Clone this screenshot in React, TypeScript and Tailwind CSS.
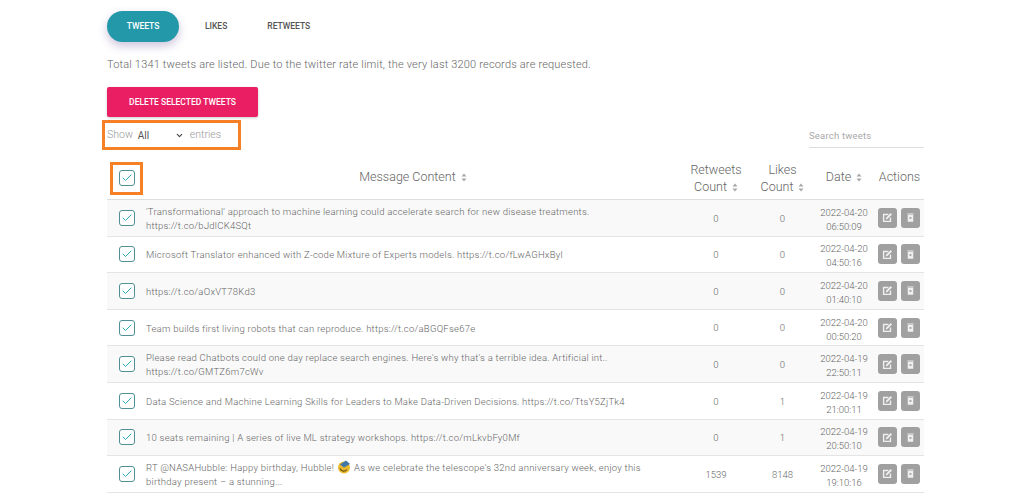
import { Check, ChevronDown } from "lucide-react";

type Row = {
  text: string[];
  retweets: number;
  likes: number;
  date: string;
  time: string;
  emoji?: boolean;
};

const rows: Row[] = [
  {
    text: ["'Transformational' approach to machine learning could accelerate search for new disease treatments.", "https://t.co/bJdlCK4SQt"],
    retweets: 0,
    likes: 0,
    date: "2022-04-20",
    time: "06:50:09",
  },
  {
    text: ["Microsoft Translator enhanced with Z-code Mixture of Experts models. https://t.co/fLwAGHxByl"],
    retweets: 0,
    likes: 0,
    date: "2022-04-20",
    time: "04:50:16",
  },
  { text: ["https://t.co/aOxVT78Kd3"], retweets: 0, likes: 0, date: "2022-04-20", time: "01:40:10" },
  {
    text: ["Team builds first living robots that can reproduce. https://t.co/aBGQFse67e"],
    retweets: 0,
    likes: 0,
    date: "2022-04-20",
    time: "00:50:20",
  },
  {
    text: ["Please read Chatbots could one day replace search engines. Here's why that's a terrible idea. Artificial int..", "https://t.co/GMTZ6m7cWv"],
    retweets: 0,
    likes: 0,
    date: "2022-04-19",
    time: "22:50:11",
  },
  {
    text: ["Data Science and Machine Learning Skills for Leaders to Make Data-Driven Decisions. https://t.co/TtsY5ZjTk4"],
    retweets: 0,
    likes: 1,
    date: "2022-04-19",
    time: "21:00:11",
  },
  {
    text: ["10 seats remaining | A series of live ML strategy workshops. https://t.co/mLkvbFy0Mf"],
    retweets: 0,
    likes: 1,
    date: "2022-04-19",
    time: "20:50:10",
  },
  {
    text: ["As we celebrate the telescope's 32nd anniversary week, enjoy this", "birthday present – a stunning..."],
    retweets: 1539,
    likes: 8148,
    date: "2022-04-19",
    time: "19:10:16",
    emoji: true,
  },
];

const Box = () => (
  <span className="flex h-[16px] w-[16px] items-center justify-center rounded-[3px] border-[1.5px] border-[#4f8f95] bg-white">
    <Check size={12} strokeWidth={2} className="text-[#2aa9b8]" />
  </span>
);

const Sort = () => (
  <svg width="6" height="9" viewBox="0 0 6 9" className="ml-[5px] inline align-[-1px]">
    <path d="M3 0.5L5.5 3.5H0.5zM3 8.5L0.5 5.5H5.5z" fill="#a8a8a8" />
  </svg>
);

const EditIcon = () => (
  <svg width="11" height="11" viewBox="0 0 12 12">
    <path d="M1 2h6v1.5H2.5v6h6V6H10v5H1z" fill="#f0f0f0" />
    <path d="M4 8.2l.5-2L9.5 1.2l1.4 1.4-5 5z" fill="#f0f0f0" />
  </svg>
);

const TrashIcon = () => (
  <svg width="11" height="11" viewBox="0 0 12 12">
    <path d="M2.5 1.5h7v1h-7zM3 3h6v7.5H3z" fill="#f0f0f0" />
    <path d="M5 5.5h2v2H5z" fill="#a0a0a0" />
  </svg>
);

const Hubble = () => (
  <svg width="14" height="14" viewBox="0 0 14 14" className="mx-[3px] inline align-[-3px]">
    <circle cx="7" cy="7.5" r="6" fill="#e9b92f" />
    <path d="M3 4.5l6-4 4 3.5-6 3.5z" fill="#3f78a8" />
    <path d="M3 8.5c1.5 3 5 3.5 7 1" stroke="#6b5410" strokeWidth="1.2" fill="none" />
  </svg>
);

export default function App() {
  return (
    <div className="h-[496px] w-[1024px] overflow-hidden bg-white font-['Roboto',sans-serif]">
      <div className="ml-[107px] w-[817px]">
        <div className="flex items-center pt-[11px]">
          <div className="flex h-[31px] w-[72px] items-center justify-center rounded-full bg-[#2398a8] text-[8.5px] font-medium text-white shadow-[0_4px_10px_rgba(90,60,140,0.3)]">
            TWEETS
          </div>
          <span className="ml-[26px] text-[8.5px] font-medium text-[#555]">LIKES</span>
          <span className="ml-[40px] text-[8.5px] font-medium text-[#555]">RETWEETS</span>
        </div>

        <p className="mt-[16px] text-[11px] font-light leading-[14px] tracking-[0.18px] text-[#666]">
          Total 1341 tweets are listed. Due to the twitter rate limit, the very last 3200 records are requested.
        </p>

        <div className="mt-[15px] flex h-[30px] w-[151px] items-center justify-center rounded-[2px] bg-[#e91e63] text-[8.5px] font-medium text-white shadow-[0_1px_3px_rgba(0,0,0,0.2)]">
          DELETE SELECTED TWEETS
        </div>

        <div className="flex items-start justify-between">
          <div className="-ml-[5px] mt-[3px] flex h-[30px] w-[139px] items-center border-[3px] border-[#f58025] pl-[2px] text-[10.5px] font-light text-[#999]">
            Show
            <span className="ml-[5px] w-[37px] text-[10px] font-normal text-[#555]">All</span>
            <ChevronDown size={9} strokeWidth={3} className="text-[#444]" />
            <span className="ml-[6px]">entries</span>
          </div>
          <div className="mt-[10px] h-[21px] w-[115px] border-b border-[#ddd] text-[9.5px] leading-[17px] tracking-[0.2px] text-[#aaa]">
            Search tweets
          </div>
        </div>

        <table className="mt-[11px] w-[817px] table-fixed border-collapse text-[#666]">
          <colgroup>
            <col className="w-[39px]" />
            <col className="w-[534px]" />
            <col className="w-[72px]" />
            <col className="w-[61px]" />
            <col className="w-[62px]" />
            <col className="w-[49px]" />
          </colgroup>
          <thead>
            <tr className="h-[38px] border-b border-[#ddd] text-[12.5px] leading-[17px]">
              <th className="p-0 font-light">
                <div className="-mt-[4px] ml-[3px] flex h-[33px] w-[33px] items-center justify-center border-[3px] border-[#f58025]">
                  <Box />
                </div>
              </th>
              <th className="p-0 pb-[7px] font-light">
                Message Content
                <Sort />
              </th>
              <th className="p-0 pb-[4px] font-light">
                Retweets
                <br />
                Count
                <Sort />
              </th>
              <th className="p-0 pb-[4px] font-light">
                Likes
                <br />
                Count
                <Sort />
              </th>
              <th className="p-0 pb-[7px] font-light">
                Date
                <Sort />
              </th>
              <th className="p-0 pb-[7px] font-light">Actions</th>
            </tr>
          </thead>
          <tbody>
            {rows.map((row, i) => (
              <tr key={i} className={`h-[36.6px] border-b border-[#e4e4e4] ${i % 2 === 0 ? "bg-[#f9f9f9]" : "bg-white"}`}>
                <td className="p-0 pl-[12px]">
                  <Box />
                </td>
                <td className="p-0 pt-[2px] text-[9.5px] font-light leading-[14px] tracking-[0.24px]">
                  {row.emoji && (
                    <>
                      RT @NASAHubble: Happy birthday, Hubble!
                      <Hubble />
                    </>
                  )}
                  {row.text.map((line, j) => (
                    <span key={j} className={row.emoji && j === 0 ? "" : "block"}>
                      {line}
                    </span>
                  ))}
                </td>
                <td className="p-0 pt-[2px] text-center text-[9.5px] font-light">{row.retweets}</td>
                <td className="p-0 pt-[2px] text-center text-[9.5px] font-light">{row.likes}</td>
                <td className="p-0 pt-[4px] text-center text-[9.5px] font-light leading-[14px]">
                  {row.date}
                  <br />
                  {row.time}
                </td>
                <td className="p-0">
                  <div className="ml-[3px] flex gap-[4px]">
                    <span className="flex h-[20px] w-[19px] items-center justify-center rounded-[3px] bg-[#a0a0a0]">
                      <EditIcon />
                    </span>
                    <span className="flex h-[20px] w-[19px] items-center justify-center rounded-[3px] bg-[#a0a0a0]">
                      <TrashIcon />
                    </span>
                  </div>
                </td>
              </tr>
            ))}
          </tbody>
        </table>
      </div>
    </div>
  );
}
